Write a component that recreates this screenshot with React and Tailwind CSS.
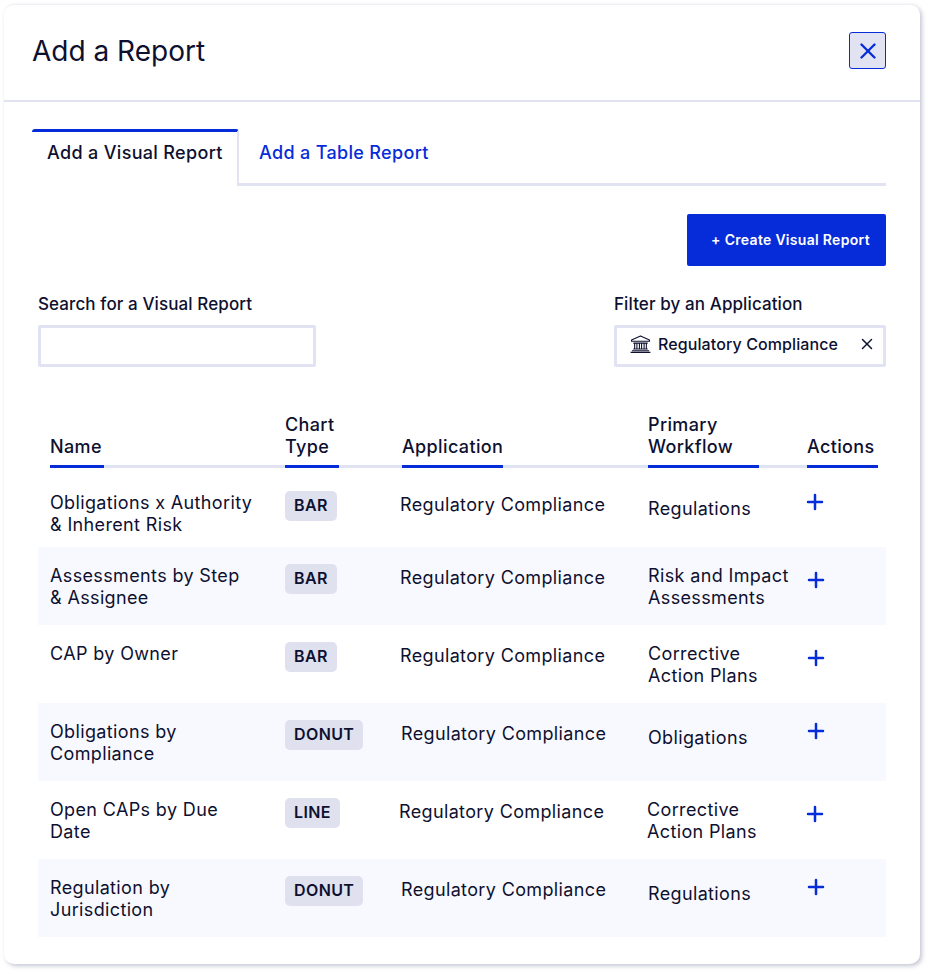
import { Plus, X } from 'lucide-react';

const rows = [
  { name: ['Obligations x Authority', '& Inherent Risk'], chart: 'BAR', flow: ['Regulations'], app: 'pl-0', wf: 'pl-0', act: 'pl-0', first: true },
  { name: ['Assessments by Step', '& Assignee'], chart: 'BAR', flow: ['Risk and Impact', 'Assessments'], app: 'pl-0', wf: 'pl-0', act: 'pl-px', tint: true },
  { name: ['CAP by Owner'], chart: 'BAR', flow: ['Corrective', 'Action Plans'], app: 'pl-0', wf: 'pl-0', act: 'pl-px' },
  { name: ['Obligations by', 'Compliance'], chart: 'DONUT', flow: ['Obligations'], app: 'pl-px', wf: 'pl-0', act: 'pl-px', tint: true },
  { name: ['Open CAPs by Due', 'Date'], chart: 'LINE', flow: ['Corrective', 'Action Plans'], app: '-ml-px', wf: '-ml-px', act: 'pl-px' },
  { name: ['Regulation by', 'Jurisdiction'], chart: 'DONUT', flow: ['Regulations'], app: 'pl-px', wf: 'pl-0', act: 'pl-px', tint: true },
];

const BankIcon = () => (
  <svg width="23" height="18" viewBox="0 0 24 20" fill="none" stroke="#0e1030" strokeWidth="1.2" className="shrink-0">
    <path d="M12 1 L22 5.5 V7 H2 V5.5 Z" strokeLinejoin="round" />
    <path d="M4 9 H20 M4 15.5 H20 M2.5 17.5 H21.5 M1 19.3 H23" />
    <path d="M5.5 9 V15.5 M8 9 V15.5 M10.8 9 V15.5 M13.2 9 V15.5 M16 9 V15.5 M18.5 9 V15.5" />
  </svg>
);

const HeadCell = ({ lines, width }) => (
  <div className={`relative -mb-[3px] border-b-[3px] border-[#062cd9] pb-[7px] ${width}`}>
    {lines.map(l => <div key={l}>{l}</div>)}
  </div>
);

const Row = ({ row }) => {
  const twoLines = row.flow.length > 1;
  return (
    <div className={`grid grid-cols-[235px_115px_248px_1fr] pl-3 text-[18px] leading-[22px] tracking-[0.36px] ${row.first ? 'h-[73px]' : 'h-[78px]'} ${row.tint ? 'bg-[#f8f9fe]' : ''}`}>
      <div className="pt-[18px]">
        {row.name.map(l => <div key={l}>{l}</div>)}
      </div>
      <div className="pt-[17px]">
        <span className="inline-block h-[30px] px-[9px] rounded-[5px] bg-[#dfe1ef] text-[16px] leading-[29px] font-semibold tracking-[0.4px]">{row.chart}</span>
      </div>
      <div className={`pt-5 ${row.app}`}>Regulatory Compliance</div>
      <div className={`flex ${row.wf}`}>
        <div className={`w-[159px] ${twoLines ? 'pt-[18px]' : 'pt-6'}`}>
          {row.flow.map(l => <div key={l}>{l}</div>)}
        </div>
        <div className={`${row.act} ${twoLines ? 'pt-[21px]' : 'pt-4'}`}>
          <Plus size={24} strokeWidth={2.5} className="-ml-1 text-[#062cd9]" />
        </div>
      </div>
    </div>
  );
};

export default function App() {
  return (
    <div className="w-[928px] h-[972px] bg-white p-1 font-['Inter',sans-serif] text-[#0e1030]">
      <div className="w-[916px] h-[960px] rounded-[10px] bg-white border-t border-[#f0f0f4] shadow-[2px_2px_4px_rgba(150,152,175,0.55)]">

        {/* header */}
        <div className="h-[97px] flex items-start justify-between pl-7 pr-[34px] pt-[27px] border-b-[2px] border-[#e1e3f3]">
          <h1 className="text-[28px] leading-[38px] font-normal">Add a Report</h1>
          <button className="w-[37px] h-[37px] flex items-center justify-center rounded-[3px] border border-[#062cd9] bg-[#e1e3f3] text-[#062cd9]">
            <X size={26} strokeWidth={2.2} />
          </button>
        </div>

        <div className="pl-7 pr-[34px] pt-[27px]">
          {/* tabs */}
          <div className="flex h-[57px] border-b-[3px] border-[#e1e3f3] text-[18px] font-medium tracking-[0.33px]">
            <div className="w-[207px] h-[57px] border-t-[3px] border-t-[#062cd9] border-r-2 border-r-[#e1e3f3] bg-white rounded-t-[3px] pl-[15px] pt-[8px] leading-[26px]">
              Add a Visual Report
            </div>
            <div className="pl-5 pt-[11px] leading-[26px] text-[#062cd9]">Add a Table Report</div>
          </div>

          <div className="flex justify-end mt-7">
            <button className="w-[199px] h-[52px] rounded-[2px] bg-[#062cd9] pl-2 pb-[2px] text-white text-[14px] font-semibold tracking-[0.3px]">
              + Create Visual Report
            </button>
          </div>

          {/* filters */}
          <div className="flex justify-between pl-[6px] mt-[26px]">
            <div>
              <label className="block text-[17px] leading-6 font-medium tracking-[0.1px]">Search for a Visual Report</label>
              <input className="block mt-[9px] w-[278px] h-[42px] bg-white border-[3px] border-[#e1e3f3] rounded-[2px] outline-none" />
            </div>
            <div>
              <label className="block text-[17px] leading-6 font-medium tracking-[0.1px]">Filter by an Application</label>
              <div className="mt-[9px] w-[272px] h-[42px] flex items-center border-[3px] border-[#e1e3f3] rounded-[2px] pl-[12px] pr-[7px] pb-1 text-[16px] font-medium tracking-[0.1px]">
                <BankIcon />
                <span className="ml-[6px] flex-1">Regulatory Compliance</span>
                <X size={18} strokeWidth={2} />
              </div>
            </div>
          </div>

          {/* table */}
          <div className="ml-[6px] mt-[47px]">
            <div className="ml-3 mr-2 grid grid-cols-[235px_117px_246px_159px_1fr] items-end border-b-[3px] border-[#e1e3f3] text-[18px] leading-[22px] font-medium tracking-[0.36px]">
              <HeadCell lines={['Name']} width="w-[54px]" />
              <HeadCell lines={['Chart', 'Type']} width="w-[54px]" />
              <HeadCell lines={['Application']} width="w-[101px]" />
              <HeadCell lines={['Primary', 'Workflow']} width="w-[111px]" />
              <HeadCell lines={['Actions']} width="w-[71px]" />
            </div>
            <div className="mt-[6px]">
              {rows.map(r => <Row key={r.name[0]} row={r} />)}
            </div>
          </div>
        </div>
      </div>
    </div>
  );
}
